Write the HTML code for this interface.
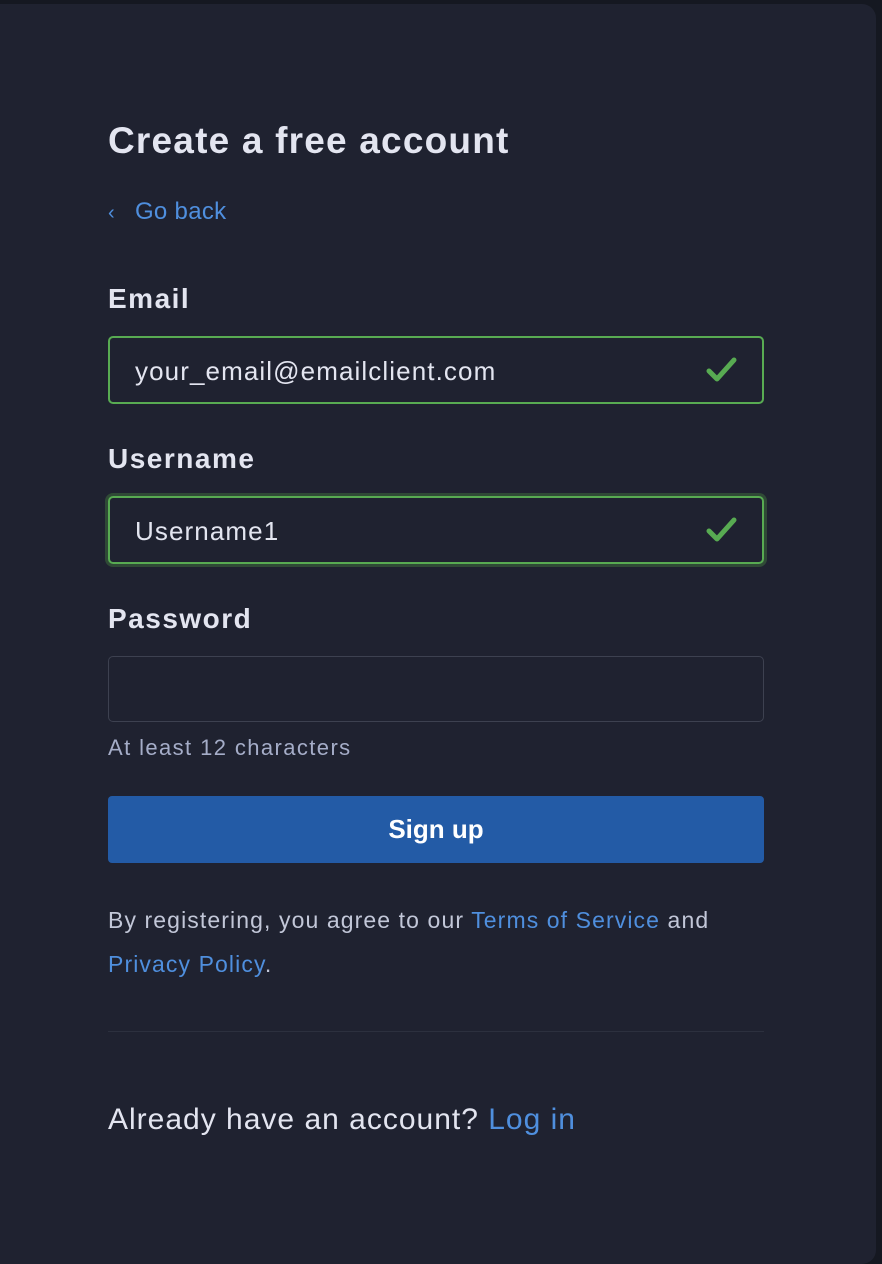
<!DOCTYPE html>
<html><head><style>
html,body{margin:0;padding:0;width:882px;height:1242px;background:#151821;overflow:hidden;font-family:"Liberation Sans",Arial,sans-serif}
.card{position:absolute;left:-20px;top:4px;width:896px;height:1260px;background:#1f2230;border-radius:14px}
.a{position:absolute;left:108px;white-space:nowrap}
h1{margin:0;font-size:37px;font-weight:bold;color:#e3e5f0;letter-spacing:1.2px}
.lbl{font-size:28px;font-weight:bold;color:#e3e5f0;letter-spacing:1.5px}
.link{color:#4f8fde}
.inp{position:absolute;left:108px;width:652px;height:64px;border:2px solid #58ab52;border-radius:5px;box-sizing:content-box;width:652px}
.inp span{position:absolute;left:25px;top:18px;font-size:26px;color:#e3e5f0;letter-spacing:1.1px}
.inp svg{position:absolute;right:24px;top:18px}
</style></head><body>
<div class="card"></div>
<div class="a" style="top:120px"><h1>Create a free account</h1></div>
<div class="a link" style="top:198px;font-size:24px;letter-spacing:0.3px"><span style="font-size:20px;margin-right:20px">&#8249;</span>Go back</div>
<div class="a lbl" style="top:283px">Email</div>
<div class="inp" style="top:336px;width:652px;height:64px"><span>your_email@emailclient.com</span><svg width="32" height="28" viewBox="0 0 32 28"><path d="M3 15 L11 23 L28 4" fill="none" stroke="#58ab52" stroke-width="5" stroke-linecap="round" stroke-linejoin="round"/></svg></div>
<div class="a lbl" style="top:443px">Username</div>
<div class="inp" style="top:496px;width:652px;height:64px;box-shadow:0 0 0 3px #2f4a36"><span>Username1</span><svg width="32" height="28" viewBox="0 0 32 28"><path d="M3 15 L11 23 L28 4" fill="none" stroke="#58ab52" stroke-width="5" stroke-linecap="round" stroke-linejoin="round"/></svg></div>
<div class="a lbl" style="top:603px">Password</div>
<div class="inp" style="top:656px;width:654px;height:64px;border:1px solid #3d4150"></div>
<div class="a" style="top:735px;font-size:22px;color:#a5adc8;letter-spacing:1.4px">At least 12 characters</div>
<div style="position:absolute;left:108px;top:796px;width:656px;height:67px;background:#235ba6;border-radius:4px;color:#fff;font-size:26px;font-weight:bold;text-align:center;line-height:67px">Sign up</div>
<div class="a" style="top:898px;font-size:23px;color:#c2c7d8;line-height:44px;white-space:normal;width:680px;letter-spacing:1.1px">By registering, you agree to our <span class="link">Terms of Service</span> and<br><span class="link">Privacy Policy</span>.</div>
<div style="position:absolute;left:108px;top:1031px;width:656px;height:1px;background:#2c303e"></div>
<div class="a" style="top:1103px;font-size:30px;color:#e3e5f0;letter-spacing:1px">Already have an account? <span class="link">Log in</span></div>
</body></html>
